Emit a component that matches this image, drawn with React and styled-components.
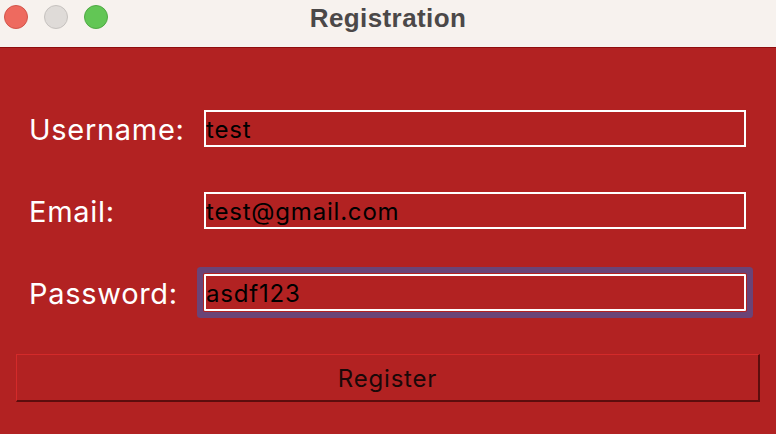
import React from "react";
import styled, { createGlobalStyle } from "styled-components";

const GlobalStyle = createGlobalStyle`
    html, body {
        margin: 0;
        padding: 0;
        background: #b22222;
        font-family: Inter, "Liberation Sans", Arial, sans-serif;
    }
`;

const Window = styled.div`
    width: 776px;
    height: 434px;
    display: flex;
    flex-direction: column;
    background: #b22222;
    overflow: hidden;
`;

const TitleBar = styled.div`
    position: relative;
    height: 47px;
    flex-shrink: 0;
    display: flex;
    align-items: center;
    justify-content: center;
    background: #f7f2ee;
    border-bottom: 1px solid #8f0e0e;
`;

const Lights = styled.div`
    position: absolute;
    left: 4px;
    top: 5px;
    display: flex;
    gap: 16px;
`;

const Light = styled.span`
    width: 24px;
    height: 24px;
    border-radius: 50%;
    background: ${(p) => p.color};
    border: 1px solid ${(p) => p.edge};
    box-sizing: border-box;
`;

const Title = styled.h1`
    margin: 0 0 10px 0;
    font-size: 26px;
    letter-spacing: 0.4px;
    font-weight: bold;
    color: #4b4848;
    font-family: "Liberation Sans", Arial, sans-serif;
`;

const Form = styled.div`
    display: grid;
    grid-template-columns: 175px 1fr;
    row-gap: 45px;
    align-items: center;
    padding: 62px 30px 0 29px;
`;

const Label = styled.label`
    color: #ffffff;
    font-size: 29px;
    letter-spacing: 0.7px;
    font-family: Inter, "Liberation Sans", sans-serif;
    padding-top: 2px;
`;

const Field = styled.input`
    height: 37px;
    box-sizing: border-box;
    border: 2px solid #ffffff;
    background: #b22222;
    color: #000000;
    font-size: 24px;
    letter-spacing: 0.8px;
    font-family: Inter, "Liberation Sans", sans-serif;
    padding: 2px 0 0 0;
    margin: 0;
    outline: none;
    box-shadow: ${(p) =>
        p.$focused ? "0 0 0 1px #b22222, 0 0 0 7px #6a4477" : "none"};
    border-radius: ${(p) => (p.$focused ? "1px" : "0")};
`;

const Button = styled.button`
    margin: 43px 16px 0 16px;
    height: 48px;
    box-sizing: border-box;
    background: #b22222;
    border-top: 1px solid #d42a2a;
    border-left: 1px solid #d42a2a;
    border-right: 2px solid #5c0d0d;
    border-bottom: 2px solid #5c0d0d;
    color: #1a0808;
    font-size: 24px;
    letter-spacing: 0.8px;
    font-family: Inter, "Liberation Sans", sans-serif;
    padding: 2px 0 0 0;
`;

const fields = [
    { label: "Username:", value: "test" },
    { label: "Email:", value: "test@gmail.com" },
    { label: "Password:", value: "asdf123", focused: true },
];

const App = () => {
    return (
        <Window>
            <GlobalStyle />
            <TitleBar>
                <Lights>
                    <Light color="#ee6a5f" edge="#d2554b" />
                    <Light color="#dfdbd8" edge="#c6c2bf" />
                    <Light color="#62c655" edge="#4fa944" />
                </Lights>
                <Title>Registration</Title>
            </TitleBar>
            <Form>
                {fields.map((f) => (
                    <React.Fragment key={f.label}>
                        <Label>{f.label}</Label>
                        <Field type="text" defaultValue={f.value} $focused={f.focused} readOnly />
                    </React.Fragment>
                ))}
            </Form>
            <Button>Register</Button>
        </Window>
    );
};

export default App;
